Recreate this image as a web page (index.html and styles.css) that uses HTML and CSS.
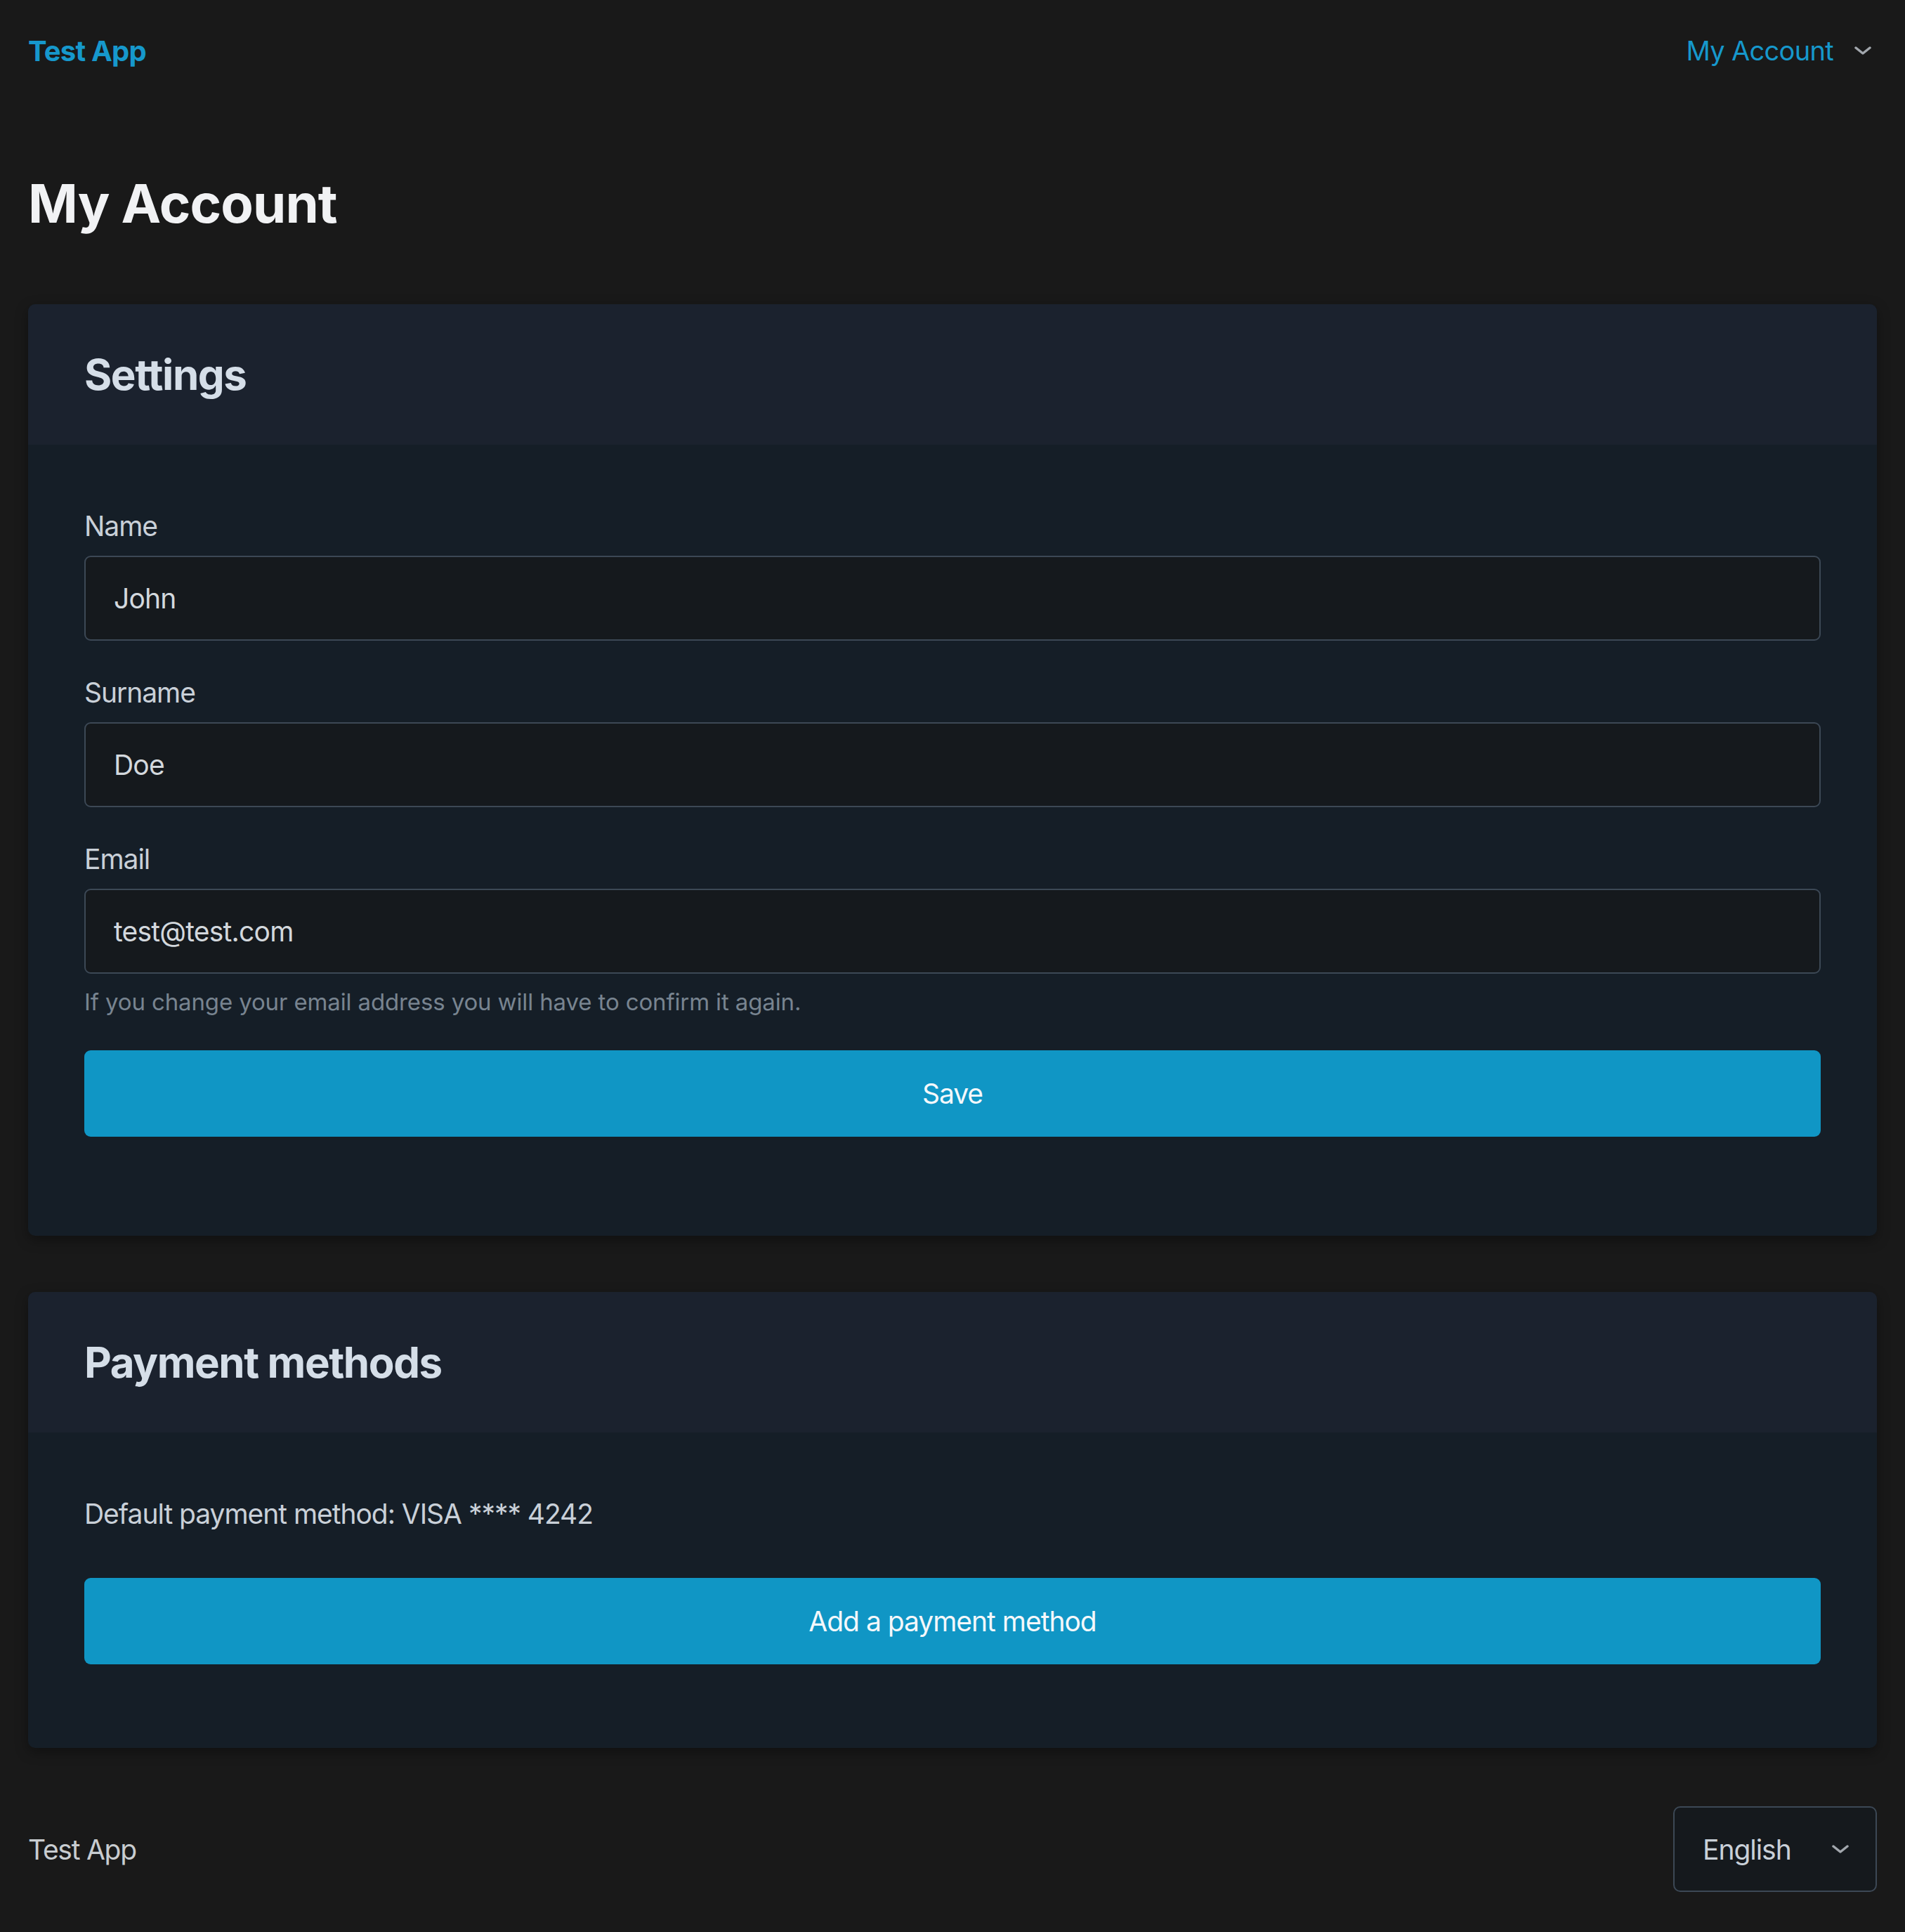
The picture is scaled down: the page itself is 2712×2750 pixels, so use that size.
FILE: index.html
```html
<!DOCTYPE html>
<html lang="en">
<head>
<meta charset="utf-8">
<title>My Account - Test App</title>
<link rel="stylesheet" href="styles.css">
</head>
<body>
<div class="page">
  <header class="topbar">
    <a class="brand" href="#">Test App</a>
    <button class="nav-menu" type="button">
      <span>My Account</span>
      <svg class="chev" viewBox="0 0 24 12" aria-hidden="true"><path d="M2 2 L12 10 L22 2" /></svg>
    </button>
  </header>

  <main>
    <h1 class="page-title">My Account</h1>

    <section class="card">
      <div class="card-head"><h2>Settings</h2></div>
      <div class="card-body settings-body">
        <form class="form">
          <label class="field-label" for="name">Name</label>
          <input class="field-input" id="name" type="text" value="John">
          <label class="field-label" for="surname">Surname</label>
          <input class="field-input" id="surname" type="text" value="Doe">
          <label class="field-label" for="email">Email</label>
          <input class="field-input" id="email" type="email" value="test@test.com">
          <p class="help">If you change your email address you will have to confirm it again.</p>
          <button class="btn-primary" type="button">Save</button>
        </form>
      </div>
    </section>

    <section class="card">
      <div class="card-head"><h2>Payment methods</h2></div>
      <div class="card-body payment-body">
        <p class="payment-text">Default payment method: VISA **** 4242</p>
        <button class="btn-primary" type="button">Add a payment method</button>
      </div>
    </section>
  </main>

  <footer class="footer">
    <span class="footer-brand">Test App</span>
    <div class="lang-select">
      <span>English</span>
      <svg class="chev" viewBox="0 0 24 12" aria-hidden="true"><path d="M2 2 L12 10 L22 2" /></svg>
    </div>
  </footer>
</div>
</body>
</html>
```

FILE: styles.css
```css
* { box-sizing: border-box; }

html, body {
  margin: 0;
  padding: 0;
  background: #191919;
}

body {
  font-family: Inter, "Noto Sans", "Liberation Sans", sans-serif;
  color: #c9d0d8;
  font-size: 40px;
  letter-spacing: -0.026em;
}

.page {
  padding: 0 40px;
}

.topbar {
  height: 144px;
  display: flex;
  align-items: center;
  justify-content: space-between;
}

.brand {
  color: #1698cc;
  font-weight: 700;
  font-size: 40px;
  letter-spacing: -0.02em;
  text-decoration: none;
}

.nav-menu {
  display: flex;
  align-items: center;
  gap: 30px;
  background: none;
  border: none;
  padding: 0 8px 0 0;
  color: #1698cc;
  font-family: inherit;
  font-size: 38px;
  letter-spacing: -0.018em;
}

.chev {
  width: 24px;
  height: 12px;
  fill: none;
  stroke: #a2a7ad;
  stroke-width: 3.5;
  stroke-linecap: round;
  stroke-linejoin: round;
}

.page-title {
  margin: 100px 0 98px;
  font-size: 76px;
  line-height: 91px;
  font-weight: 700;
  letter-spacing: -0.012em;
  color: #f1f2f4;
}

.card {
  border-radius: 10px;
  overflow: hidden;
  background: #151e27;
  box-shadow: 0 6px 18px rgba(0, 0, 0, 0.35);
  margin-bottom: 80px;
}

.card-head {
  height: 200px;
  padding: 0 80px;
  display: flex;
  align-items: center;
  background: #1b222e;
}

.card-head h2 {
  margin: 0;
  font-size: 60px;
  font-weight: 700;
  letter-spacing: -0.024em;
  color: #d5dee8;
}

.card-body {
  padding: 88px 80px 0;
}

.settings-body { padding-bottom: 141px; }
.payment-body { padding-bottom: 119px; }

.form {
  display: flex;
  flex-direction: column;
}

.field-label {
  display: block;
  line-height: 56px;
  font-size: 39px;
  color: #c9d0d8;
  margin-bottom: 14px;
}

.field-input {
  height: 121px;
  width: 100%;
  background: #15191d;
  border: 2px solid #3c4855;
  border-radius: 9px;
  padding: 0 40px;
  font-family: inherit;
  font-size: 39px;
  letter-spacing: -0.02em;
  color: #d3d8dd;
  margin-bottom: 46px;
}

.help {
  margin: -31px 0 44px;
  line-height: 50px;
  font-size: 33px;
  letter-spacing: -0.004em;
  color: #788490;
}

.btn-primary {
  display: block;
  width: 100%;
  height: 123px;
  border: none;
  border-radius: 9px;
  background: #1096c5;
  color: #f4f8fb;
  font-family: inherit;
  font-size: 39px;
  letter-spacing: -0.026em;
}

.payment-text {
  margin: 0 0 63px;
  line-height: 56px;
  font-size: 39px;
  color: #c9d0d8;
}

.card + .card { margin-bottom: 0; }

.footer {
  display: flex;
  align-items: center;
  justify-content: space-between;
  padding: 83px 0 56px;
}

.footer-brand {
  font-size: 39px;
  letter-spacing: -0.032em;
  color: #c8ccd0;
}

.lang-select {
  width: 290px;
  height: 122px;
  border: 2px solid #3c4855;
  border-radius: 10px;
  background: #15191d;
  display: flex;
  align-items: center;
  justify-content: space-between;
  padding: 0 38px 0 40px;
  font-size: 39px;
  color: #c9d0d8;
}
```
